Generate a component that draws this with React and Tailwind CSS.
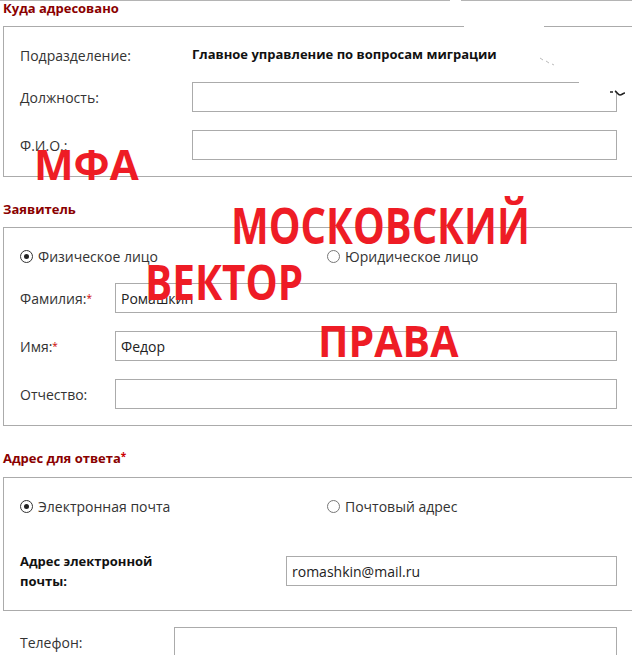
import React from "react";

function Radio({ checked, label, className = "" }) {
  return (
    <label className={`flex items-center gap-[5px] ${className}`}>
      <span className={`w-[13px] h-[13px] rounded-full border flex items-center justify-center ${checked ? "border-[#333]" : "border-[#777]"}`}>
        {checked && <span className="w-[5px] h-[5px] rounded-full bg-[#222]" />}
      </span>
      <span>{label}</span>
    </label>
  );
}

function Req() {
  return <sup className="text-[#c00] text-[10px] relative -top-[2px]">*</sup>;
}

function Input({ value, w }) {
  return (
    <div className={`h-[30px] border border-[#ababab] bg-white px-[5px] flex items-center text-[#222] ${w}`}>
      {value}
    </div>
  );
}

function Heading({ children, className = "" }) {
  return (
    <div className={`pl-[3px] text-[13px] leading-[16px] font-bold text-[#8a0000] ${className}`}>
      {children}
    </div>
  );
}

export default function App() {
  return (
    <div className="relative w-[632px] h-[655px] overflow-hidden bg-white font-['Open_Sans',sans-serif] text-[14px] text-[#333]">
      {/* top edge line */}
      <div className="border-t border-[#b4b4b4]" />
      <div className="absolute left-[450px] top-0 w-[11px] h-[2px] bg-white" />

      {/* Куда адресовано */}
      <Heading className="-mt-px text-[13.5px]">Куда адресовано</Heading>
      <div className="relative mt-[10px] ml-[3px] w-[700px] border border-[#ababab] pl-4 pt-[13px] pb-4">
        <div className="absolute left-[460px] -top-px w-[80px] h-[2px] bg-white" />
        <div className="flex items-center h-[30px]">
          <span className="w-[172px]">Подразделение:</span>
          <span className="font-bold text-[13px] text-[#111]">Главное управление по вопросам миграции</span>
        </div>
        <div className="flex items-center mt-[12px]">
          <span className="w-[172px]">Должность:</span>
          <div className="relative">
            <Input w="w-[425px]" />
            <div className="absolute right-[-2px] top-[-1px] w-[40px] h-[11px] bg-white" />
          </div>
        </div>
        <div className="flex items-center mt-[18px]">
          <span className="w-[172px]">Ф.И.О.:</span>
          <Input w="w-[425px]" />
        </div>
      </div>

      {/* Заявитель */}
      <Heading className="mt-[24px]">Заявитель</Heading>
      <div className="mt-[10px] ml-[3px] w-[700px] border border-[#ababab] pl-4 pt-[13px] pb-4">
        <div className="flex items-center h-[30px]">
          <Radio checked label="Физическое лицо" className="w-[307px]" />
          <Radio label="Юридическое лицо" />
        </div>
        <div className="flex items-center mt-[12px]">
          <span className="w-[95px]">Фамилия:<Req /></span>
          <Input value="Ромашкин" w="w-[502px]" />
        </div>
        <div className="flex items-center mt-[18px]">
          <span className="w-[95px]">Имя:<Req /></span>
          <Input value="Федор" w="w-[502px]" />
        </div>
        <div className="flex items-center mt-[18px]">
          <span className="w-[95px]">Отчество:</span>
          <Input w="w-[502px]" />
        </div>
      </div>

      {/* Адрес для ответа */}
      <Heading className="mt-[24px]">
        Адрес для ответа<span className="text-[#c00] text-[10px] relative -top-[3px]">*</span>
      </Heading>
      <div className="mt-[10px] ml-[3px] w-[700px] border border-[#ababab] pl-4 pt-[13px] pb-[19px]">
        <div className="flex items-center h-[30px]">
          <Radio checked label="Электронная почта" className="w-[307px]" />
          <Radio label="Почтовый адрес" />
        </div>
        <div className="flex items-center mt-[30px]">
          <span className="w-[266px] font-bold text-[13px] text-[#111] leading-[20px]">
            Адрес электронной
            <br />
            почты:
          </span>
          <Input value="romashkin@mail.ru" w="w-[331px]" />
        </div>
      </div>

      <div className="flex items-center mt-[16px] pl-[20px]">
        <span className="w-[154px]">Телефон:</span>
        <Input w="w-[443px]" />
      </div>

      {/* small scan marks */}
      <svg className="absolute left-[538px] top-[56px]" width="20" height="12" viewBox="0 0 20 12">
        <path d="M2 2 L5 4 M8 5 L11 7 M14 8 L16 9" stroke="#bbb" strokeWidth="1" />
      </svg>
      <svg className="absolute left-[609px] top-[90px]" width="18" height="10" viewBox="0 0 18 10">
        <path d="M1 2 L4 2 M6 1 C8 2 9 5 11 5 C13 5 14 3 16 3" stroke="#222" strokeWidth="1.6" fill="none" />
      </svg>

      {/* watermark overlay */}
      <div className="absolute inset-0 pointer-events-none font-['Open_Sans',sans-serif] font-bold text-[#ee1c25] leading-none">
        <span className="absolute left-[34px] top-[143px] text-[42px]">МФА</span>
        <span className="absolute left-[231px] top-[200px] text-[40px] origin-top scale-y-[1.25]">МОСКОВСКИЙ</span>
        <span className="absolute left-[145px] top-[258px] text-[40.5px] origin-top scale-y-[1.2]">ВЕКТОР</span>
        <span className="absolute left-[318px] top-[319px] text-[41px] origin-top scale-y-[1.05]">ПРАВА</span>
      </div>
    </div>
  );
}
